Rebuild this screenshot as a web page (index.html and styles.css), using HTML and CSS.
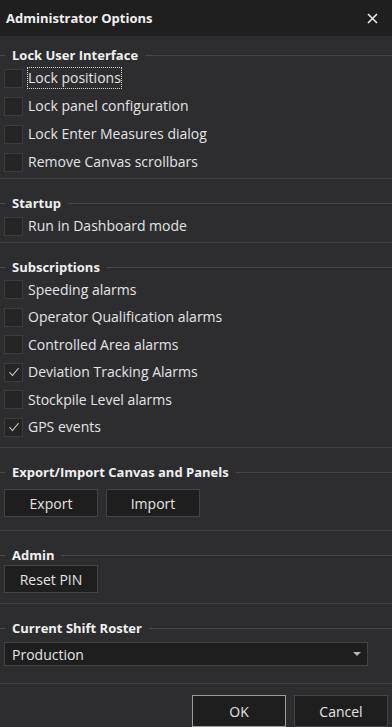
FILE: index.html
```html
<!DOCTYPE html>
<html lang="en">
<head>
  <meta charset="UTF-8" />
  <title>Administrator Options</title>
  <link rel="stylesheet" href="styles.css">
</head>
<body>
  <div class="dialog">
    <header class="titlebar">
      <h1>Administrator Options</h1>
      <button class="close" type="button" aria-label="Close">
        <svg width="11" height="11" viewBox="0 0 11 11"><path d="M1 1L10 10M10 1L1 10" stroke="#e8e8e8" stroke-width="1.6" fill="none"/></svg>
      </button>
    </header>

    <section class="group first">
      <div class="legend">Lock User Interface</div>
      <label class="check"><span class="box"></span><span class="text focused">Lock positions</span></label>
      <label class="check"><span class="box"></span><span class="text">Lock panel configuration</span></label>
      <label class="check"><span class="box"></span><span class="text">Lock Enter Measures dialog</span></label>
      <label class="check"><span class="box"></span><span class="text">Remove Canvas scrollbars</span></label>
    </section>

    <section class="group">
      <div class="legend">Startup</div>
      <label class="check"><span class="box"></span><span class="text">Run in Dashboard mode</span></label>
    </section>

    <section class="group subs">
      <div class="legend">Subscriptions</div>
      <label class="check"><span class="box"></span><span class="text">Speeding alarms</span></label>
      <label class="check"><span class="box"></span><span class="text">Operator Qualification alarms</span></label>
      <label class="check"><span class="box"></span><span class="text">Controlled Area alarms</span></label>
      <label class="check"><span class="box checked"></span><span class="text">Deviation Tracking Alarms</span></label>
      <label class="check"><span class="box"></span><span class="text">Stockpile Level alarms</span></label>
      <label class="check"><span class="box checked"></span><span class="text">GPS events</span></label>
    </section>

    <section class="group transfer">
      <div class="legend">Export/Import Canvas and Panels</div>
      <div class="btn-row">
        <button class="btn" type="button">Export</button>
        <button class="btn" type="button">Import</button>
      </div>
    </section>

    <section class="group admin">
      <div class="legend">Admin</div>
      <div class="btn-row">
        <button class="btn" type="button">Reset PIN</button>
      </div>
    </section>

    <section class="group roster">
      <div class="legend">Current Shift Roster</div>
      <div class="select">
        <span>Production</span>
        <svg width="8" height="5" viewBox="0 0 8 5"><path d="M0 0H8L4 4Z" fill="#b8b8b8"/></svg>
      </div>
    </section>

    <footer class="actions">
      <button class="btn wide default" type="button">OK</button>
      <button class="btn wide" type="button">Cancel</button>
    </footer>
  </div>
</body>
</html>
```

FILE: styles.css
```css
* {
  margin: 0;
  padding: 0;
  box-sizing: border-box;
}

body {
  background-color: #2d2d30;
  color: #e4e4e4;
  font-family: 'Open Sans', 'Liberation Sans', sans-serif;
  font-size: 14px;
}

.dialog {
  width: 392px;
  height: 727px;
  overflow: hidden;
}

.titlebar {
  height: 36px;
  background-color: #1f1f20;
  display: flex;
  justify-content: space-between;
  align-items: center;
  padding: 0 14px 0 6px;
}

.titlebar h1 {
  font-size: 13px;
  font-weight: bold;
  color: #f0f0f0;
}

.close {
  background: none;
  border: none;
  display: flex;
}

.group {
  border-bottom: 1px solid #3e3e42;
  padding: 15px 0 2px;
}

.group.first {
  padding-top: 10px;
}

.group.subs {
  padding-bottom: 6px;
}

.legend {
  display: flex;
  align-items: center;
  gap: 7px;
  height: 18px;
  font-size: 13px;
  font-weight: bold;
  color: #f0f0f0;
}

.legend::before {
  content: "";
  width: 5px;
  height: 1px;
  background-color: #48484c;
}

.legend::after {
  content: "";
  flex: 1;
  height: 1px;
  background-color: #48484c;
}

.check {
  display: flex;
  align-items: center;
  gap: 4px;
  height: 28px;
  padding-left: 4px;
}

.subs .check {
  height: 27.5px;
}

.box {
  width: 19px;
  height: 19px;
  background-color: #252526;
  border: 1px solid #3c3c3f;
  display: flex;
  align-items: center;
  justify-content: center;
}

.box.checked::after {
  content: "";
  width: 9px;
  height: 4px;
  border-left: 1.5px solid #d0d0d0;
  border-bottom: 1.5px solid #d0d0d0;
  transform: translateY(-2px) rotate(-50deg) skewX(-8deg);
}

.text {
  padding: 1px 0;
  line-height: 18px;
  border: 1px solid transparent;
}

.text.focused {
  border: 1px dotted #d8d8d8;
}

.btn-row {
  display: flex;
  gap: 8px;
  padding: 8px 4px 11px;
}

.admin .btn-row {
  padding: 1px 4px 8px;
}

.btn {
  width: 94px;
  height: 28px;
  background-color: #1e1e1e;
  border: 1px solid #434346;
  color: #e4e4e4;
  font-family: inherit;
  font-size: 14px;
}

.select {
  margin: 5px 24px 15px 4px;
  height: 24px;
  background-color: #1e1e1e;
  border: 1px solid #434346;
  display: flex;
  align-items: center;
  justify-content: space-between;
  padding: 0 6px 0 7px;
}

.actions {
  display: flex;
  justify-content: flex-end;
  gap: 8px;
  padding: 11px 4px 0;
}

.btn.wide {
  height: 32px;
}

.btn.default {
  border-color: #9c9c9c;
}
```
